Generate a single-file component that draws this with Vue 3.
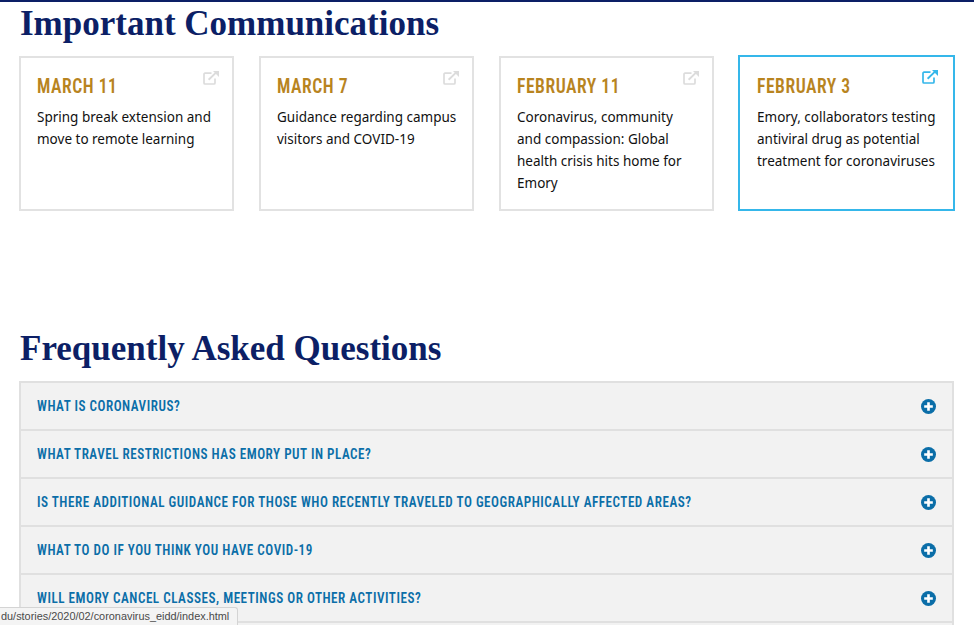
<script setup>
const cards = [
  { date: 'March 11', text: 'Spring break extension and move to remote learning' },
  { date: 'March 7', text: 'Guidance regarding campus visitors and COVID-19' },
  { date: 'February 11', text: 'Coronavirus, community and compassion: Global health crisis hits home for Emory' },
  { date: 'February 3', text: 'Emory, collaborators testing antiviral drug as potential treatment for coronaviruses', active: true }
]
const faqs = [
  'What is coronavirus?',
  'What travel restrictions has Emory put in place?',
  'Is there additional guidance for those who recently traveled to geographically affected areas?',
  'What to do if you think you have COVID-19',
  'Will Emory cancel classes, meetings or other activities?'
]
</script>

<template>
  <div class="page">
    <h2 class="title first">Important Communications</h2>
    <div class="cards">
      <a v-for="c in cards" :key="c.date" class="card" :class="{ active: c.active }">
        <svg class="ext" viewBox="0 0 16 14" width="16" height="14" fill="none" stroke="currentColor">
          <path d="M8.5 2.2H2a1 1 0 0 0-1 1V12a1 1 0 0 0 1 1h9a1 1 0 0 0 1-1V7.5" stroke-width="1.7" />
          <path d="M5.6 8.8 13 1.6" stroke-width="1.9" />
          <path d="M10 0h6v6z" fill="currentColor" stroke="none" />
        </svg>
        <div class="date"><span>{{ c.date }}</span></div>
        <p class="text">{{ c.text }}</p>
      </a>
    </div>
    <h2 class="title second">Frequently Asked Questions</h2>
    <div class="faq">
      <div v-for="q in faqs" :key="q" class="row">
        <span class="q">{{ q }}</span>
        <svg class="plus" viewBox="0 0 16 16" width="15" height="15">
          <circle cx="8" cy="8" r="8" fill="#0b6ea8" />
          <path d="M8 3.4v9.2M3.4 8h9.2" stroke="#fff" stroke-width="2.8" />
        </svg>
      </div>
      <div class="row empty"></div>
    </div>
    <div class="status">du/stories/2020/02/coronavirus_eidd/index.html</div>
  </div>
</template>

<style>
html, body { margin: 0; height: 625px; overflow: hidden; background: #fff; }
</style>

<style scoped>
.page {
  box-sizing: border-box;
  height: 625px;
  overflow: hidden;
  position: relative;
  border-top: 2px solid #0c1f66;
  padding: 0 20px 0 20px;
  font-family: "Noto Sans", sans-serif;
}
.title {
  margin: 0;
  font-family: "Liberation Serif", serif;
  font-weight: 700;
  font-size: 35px;
  line-height: 44px;
  color: #0c1f66;
}
.first { height: 54px; }
.second { margin-top: 116px; height: 54px; }
.cards {
  display: grid;
  grid-template-columns: repeat(4, 215px);
  gap: 25px;
  margin-left: -1px;
}
.card {
  box-sizing: border-box;
  position: relative;
  height: 155px;
  border: 2px solid #e2e2e2;
  padding: 16px 14px 0 16px;
  color: #111;
}
.card.active {
  border-color: #35b7ea;
  height: 156px;
  margin: -1px -1px 0 -1px;
  padding: 17px 15px 0 17px;
}
.ext { position: absolute; top: 13px; right: 13px; color: #dcdcdc; }
.active .ext { color: #35b7ea; right: 15px; }
.date {
  font-family: "Roboto", sans-serif;
  font-stretch: 75%;
  font-weight: 600;
  font-size: 20px;
  line-height: 24px;
  letter-spacing: 0.6px;
  text-transform: uppercase;
  color: #b8841f;
  white-space: nowrap;
}
.date span {
  display: inline-block;
  transform: scaleX(0.88);
  transform-origin: left center;
}
.text {
  margin: 8px 0 0;
  font-size: 13.5px;
  line-height: 22px;
}
.faq {
  box-sizing: border-box;
  border: 2px solid #e0e0e0;
  border-bottom: 0;
  background: #f2f2f2;
  margin-left: -1px;
}
.row {
  box-sizing: border-box;
  height: 48px;
  display: flex;
  align-items: center;
  justify-content: space-between;
  padding: 0 16px;
  border-bottom: 2px solid #e0e0e0;
}
.q {
  font-family: "Roboto", sans-serif;
  font-stretch: 75%;
  font-weight: 600;
  font-size: 15px;
  letter-spacing: 0.6px;
  text-transform: uppercase;
  color: #0b6ea8;
  white-space: nowrap;
  display: inline-block;
  transform: scaleX(0.875);
  transform-origin: left center;
}
.status {
  position: absolute;
  left: 0;
  bottom: 0;
  height: 17px;
  padding: 0 8px 0 1px;
  background: #f4f4f4;
  border: 1px solid #d4d4d4;
  border-left: 0;
  border-bottom: 0;
  border-radius: 0 3px 0 0;
  font-family: "Liberation Sans", sans-serif;
  font-size: 10.9px;
  line-height: 17px;
  color: #4a4a4a;
}
</style>
